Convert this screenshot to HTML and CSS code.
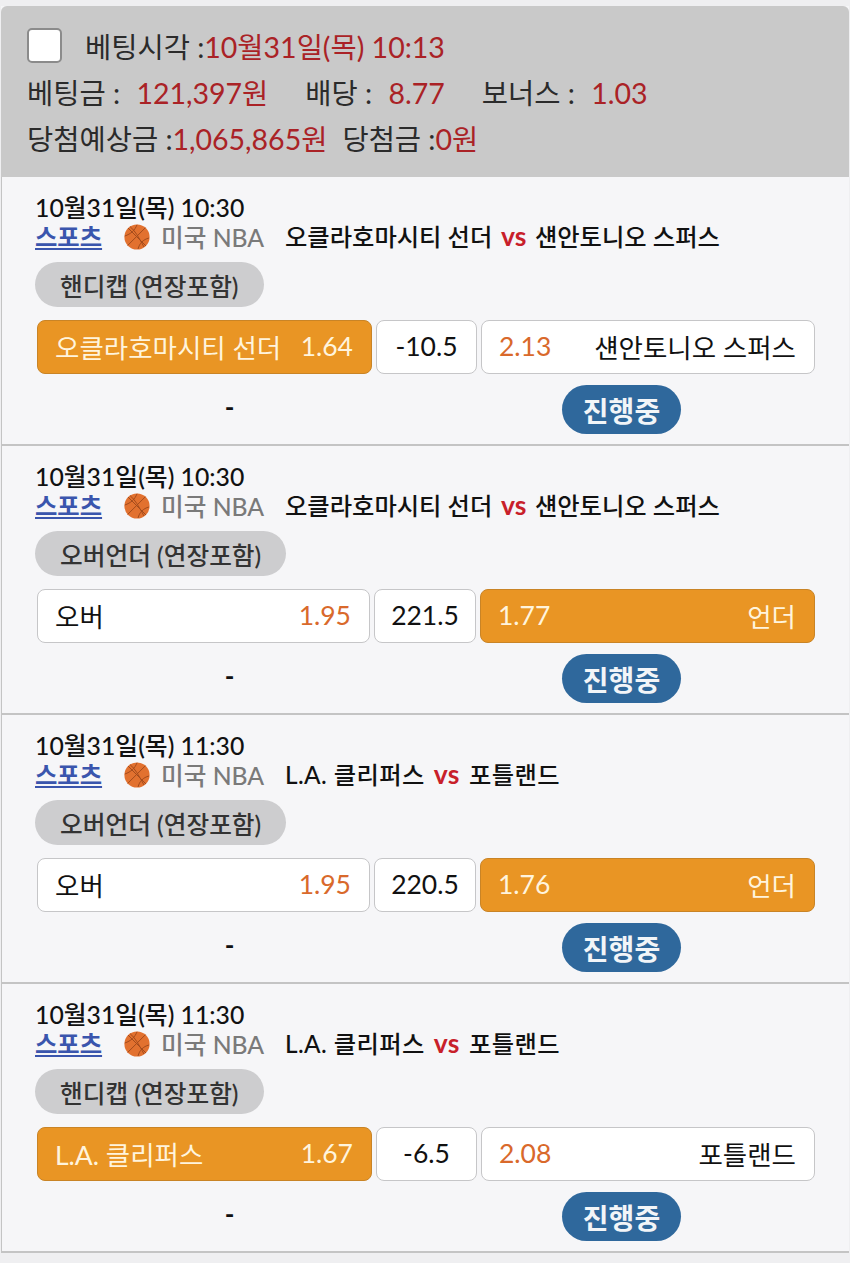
FILE: index.html
```html
<!DOCTYPE html>
<html lang="ko">
<head>
<meta charset="utf-8">
<title>베팅내역</title>
<link rel="stylesheet" href="styles.css">
</head>
<body>
<svg class="defs" width="0" height="0" aria-hidden="true">
  <symbol id="ball" viewBox="0 0 26 26">
    <circle cx="13" cy="13" r="12.6" fill="#e2712f"/>
    <g fill="none" stroke="#a34b1c" stroke-width="1">
      <path d="M4 4 L22 22"/>
      <path d="M21.5 3.6 L3.6 21.5"/>
      <path d="M13 .8 C11 6 7 10 .8 12"/>
      <path d="M25 14 C19 15.5 15.5 19.5 14 25"/>
      <path d="M6 2.5 C11 7 14 12 20 23"/>
    </g>
  </symbol>
</svg>
<main class="slip">
  <header class="summary">
    <div class="line line-first">
      <span class="check"></span>
      <span>베팅시각 :<em>10월31일(목) 10:13</em></span>
    </div>
    <div class="line line-amounts">
      <span>베팅금 : <em class="gap">121,397원</em></span>
      <span>배당 : <em class="gap">8.77</em></span>
      <span>보너스 : <em class="gap">1.03</em></span>
    </div>
    <div class="line line-win">
      <span>당첨예상금 :<em>1,065,865원</em></span>
      <span>당첨금 :<em>0원</em></span>
    </div>
  </header>

  <section class="game">
    <div class="date">10월31일(목) 10:30</div>
    <div class="meta">
      <a class="sport">스포츠</a>
      <svg class="ball"><use href="#ball"/></svg>
      <span class="league">미국 NBA</span>
      <span class="teams">오클라호마시티 선더 <b>vs</b> 섄안토니오 스퍼스</span>
    </div>
    <div class="market">핸디캡 (연장포함)</div>
    <div class="bets bets-hc">
      <div class="bet on"><span>오클라호마시티 선더</span><span>1.64</span></div>
      <div class="line-val">-10.5</div>
      <div class="bet"><span class="odd">2.13</span><span>섄안토니오 스퍼스</span></div>
    </div>
    <div class="result"><span class="dash">-</span><span class="status">진행중</span></div>
  </section>

  <section class="game">
    <div class="date">10월31일(목) 10:30</div>
    <div class="meta">
      <a class="sport">스포츠</a>
      <svg class="ball"><use href="#ball"/></svg>
      <span class="league">미국 NBA</span>
      <span class="teams">오클라호마시티 선더 <b>vs</b> 섄안토니오 스퍼스</span>
    </div>
    <div class="market">오버언더 (연장포함)</div>
    <div class="bets bets-ou">
      <div class="bet"><span>오버</span><span class="odd">1.95</span></div>
      <div class="line-val">221.5</div>
      <div class="bet on"><span>1.77</span><span>언더</span></div>
    </div>
    <div class="result"><span class="dash">-</span><span class="status">진행중</span></div>
  </section>

  <section class="game">
    <div class="date">10월31일(목) 11:30</div>
    <div class="meta">
      <a class="sport">스포츠</a>
      <svg class="ball"><use href="#ball"/></svg>
      <span class="league">미국 NBA</span>
      <span class="teams teams-short">L.A. 클리퍼스 <b>vs</b> 포틀랜드</span>
    </div>
    <div class="market">오버언더 (연장포함)</div>
    <div class="bets bets-ou">
      <div class="bet"><span>오버</span><span class="odd">1.95</span></div>
      <div class="line-val">220.5</div>
      <div class="bet on"><span>1.76</span><span>언더</span></div>
    </div>
    <div class="result"><span class="dash">-</span><span class="status">진행중</span></div>
  </section>

  <section class="game">
    <div class="date">10월31일(목) 11:30</div>
    <div class="meta">
      <a class="sport">스포츠</a>
      <svg class="ball"><use href="#ball"/></svg>
      <span class="league">미국 NBA</span>
      <span class="teams teams-short">L.A. 클리퍼스 <b>vs</b> 포틀랜드</span>
    </div>
    <div class="market">핸디캡 (연장포함)</div>
    <div class="bets bets-hc">
      <div class="bet on"><span>L.A. 클리퍼스</span><span>1.67</span></div>
      <div class="line-val">-6.5</div>
      <div class="bet"><span class="odd">2.08</span><span>포틀랜드</span></div>
    </div>
    <div class="result"><span class="dash">-</span><span class="status">진행중</span></div>
  </section>
</main>
</body>
</html>
```
FILE: styles.css
```css
* { box-sizing: border-box; }
html, body { height: 100%; }
body {
  margin: 0;
  padding: 6px 1px 0;
  background: #efeff1;
  font-family: "Lato", "Noto Sans CJK KR", sans-serif;
  color: #111;
  overflow: hidden;
}
.defs { position: absolute; }
.slip { background: #f6f6f8; }
.summary {
  height: 171px;
  padding: 16px 26px 0;
  background: #c9c9c9;
  border-radius: 6px 6px 0 0;
  font-size: 28.5px;
  color: #2b2b2b;
}
.summary em { font-style: normal; color: #aa2226; }
.line { display: flex; align-items: center; height: 46px; }
.line-first { gap: 23px; }
.line-amounts { gap: 37px; }
.line-win { gap: 15px; }
.gap { margin-left: 9px; }
.check {
  width: 35px; height: 35px;
  background: #fff;
  border: 2px solid #8b8b8b;
  border-radius: 5px;
}
.game {
  height: 269px;
  padding: 16px 34px 0 35px;
  border-bottom: 2px solid #c4c4c4;
  border-left: 1px solid #c4c4c4;
}
.date { height: 29px; margin-left: -2px; font-size: 24.8px; line-height: 29px; font-weight: 500; color: #111; }
.meta { display: flex; align-items: center; height: 27px; margin-left: -2px; font-size: 24.3px; font-weight: 500; }
.sport { color: #3a55ad; font-weight: 700; text-decoration: underline; text-underline-offset: 2px; width: 89px; }
.ball { width: 26px; height: 26px; margin: 2px 11px 0 0; }
.league { color: #7a7a7a; width: 124px; font-size: 24.7px; }
.teams { color: #111; white-space: nowrap; }
.teams-short { letter-spacing: .4px; }
.teams b { margin: 0 2.5px; color: #c8202a; font-size: 26.5px; font-weight: 700; }
.market {
  display: inline-flex; align-items: center;
  height: 45px;
  margin: 13px 0 0 -2px;
  padding: 0 25px;
  border-radius: 23px;
  background: #cdcdcf;
  font-size: 24.7px; font-weight: 500; color: #333;
}
.bets { display: grid; gap: 4px; height: 54px; margin-top: 13px; font-size: 26.5px; }
.bets-hc { grid-template-columns: 335px 101px 334px; }
.bets-ou { grid-template-columns: 333px 102px 335px; }
.bet, .line-val {
  display: flex; align-items: center;
  padding-bottom: 2px;
  background: #fff;
  border: 1px solid #c6c6c8;
  border-radius: 8px;
  color: #111;
}
.bet { justify-content: space-between; padding-left: 17px; padding-right: 18px; }
.line-val { justify-content: center; }
.on { background: #e99524; border-color: #c98426; color: #fff4dd; }
.odd { color: #d9692b; }
.result { display: grid; grid-template-columns: 1fr 1fr; margin-top: 11px; align-items: center; }
.dash { text-align: center; font-size: 26px; font-weight: 700; padding: 0 4px 5px 0; }
.status {
  justify-self: center;
  display: flex; align-items: center; justify-content: center;
  width: 119px; height: 49px;
  margin-left: 2px;
  border-radius: 25px;
  background: #2f689c;
  color: #f2f5f8;
  font-size: 28px; font-weight: 700;
}
```
